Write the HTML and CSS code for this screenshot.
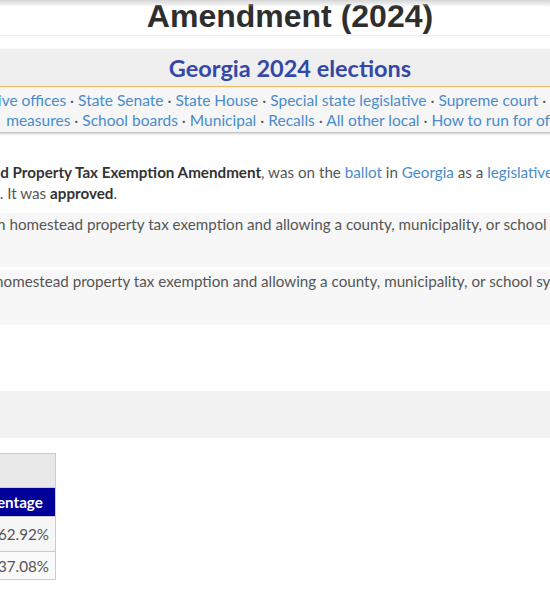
FILE: index.html
```html
<!DOCTYPE html>
<html lang="en">

<head>
    <meta charset="UTF-8">
    <meta name="viewport" content="width=device-width, initial-scale=1.0">
    <title>Georgia Increase Statewide Homestead Property Tax Exemption Amendment (2024)</title>
    <link rel="stylesheet" href="styles.css">
</head>

<body>
    <div class="top-shadow"></div>

    <div class="page">
        <h1 class="title">Georgia Increase Statewide Homestead Property Tax Exemption Amendment (2024)</h1>

        <!-- Elections navbox -->
        <div class="navbox">
            <div class="navbox-head"><a href="#">Georgia 2024 elections</a></div>
            <div class="navbox-links">
                <a href="#">U.S. President</a> · <a href="#">Congress</a> · <a href="#">State executive offices</a> · <a href="#">State Senate</a> · <a href="#">State House</a> · <a href="#">Special state legislative</a> · <a href="#">Supreme court</a> · <a href="#">Court of Appeals</a> · <a href="#">Local judges</a> · <a href="#">State ballot measures</a> · <a href="#">School boards</a> · <a href="#">Municipal</a> · <a href="#">Recalls</a> · <a href="#">All other local</a> · <a href="#">How to run for office</a>
            </div>
        </div>

        <div class="summary">
            <p class="lead">The <b>Georgia Increase Statewide Homestead Property Tax Exemption Amendment</b>, was on the <a href="#">ballot</a> in <a href="#">Georgia</a> as a <a href="#">legislatively referred constitutional amendment</a> on Nov. 5, 2024. It was <b>approved</b>.</p>

            <div class="vote-box">A "yes" vote supported a yearly increase in homestead property tax exemption and allowing a county, municipality, or school system to opt out of the exemption.</div>
            <div class="vote-box">A "no" vote opposed a yearly increase to homestead property tax exemption and allowing a county, municipality, or school system to opt out of the exemption.</div>
        </div>

        <h2 class="band">Election results</h2>

        <table class="results">
            <tr>
                <th colspan="3" class="results-title">Georgia Amendment 1</th>
            </tr>
            <tr class="results-head">
                <th class="col-result">Result</th>
                <th class="col-votes">Votes</th>
                <th class="col-pct">Percentage</th>
            </tr>
            <tr class="row-yes">
                <td><svg class="check" viewBox="0 0 24 24" width="26" height="26"><path d="M4 13l5 5L20 6" fill="none" stroke="#2e8b2e" stroke-width="3.5"/></svg> Yes</td>
                <td class="num">2,996,137</td>
                <td class="num">62.92%</td>
            </tr>
            <tr class="row-no">
                <td>No</td>
                <td class="num">1,765,752</td>
                <td class="num">37.08%</td>
            </tr>
        </table>
    </div>
</body>

</html>
```

FILE: styles.css
```css
body {
    margin: 0;
    padding: 0;
    background: #ffffff;
    font-family: Lato, "Noto Sans", sans-serif;
    font-size: 15.2px;
    color: #555555;
    overflow: hidden;
}

a {
    color: #4a8bcb;
    text-decoration: none;
}

.top-shadow {
    position: fixed;
    top: 0;
    left: 0;
    right: 0;
    height: 7px;
    background: linear-gradient(#d4d4d4, rgba(255, 255, 255, 0));
}

.page {
    width: 1152px;
    margin: -39px 0 0 -286px;
}

.title {
    margin: 0;
    padding: 0 30px;
    font-family: "Liberation Sans", Arial, sans-serif;
    font-size: 32px;
    line-height: 37px;
    font-weight: bold;
    color: #2e2e2e;
    text-align: center;
    border-bottom: 1px solid #ebebeb;
}

.navbox {
    margin-top: 14px;
    background: #f6f6f6;
    box-shadow: 0 1px 3px rgba(0, 0, 0, 0.35);
    text-align: center;
}

.navbox-head {
    height: 36px;
    line-height: 36px;
    background: #efefef;
    border-bottom: 1px solid #f5b460;
    font-size: 23.5px;
    font-weight: bold;
}

.navbox-head a {
    color: #3448a8;
}

.navbox-links {
    padding: 3px 0 2px;
    font-size: 15.5px;
    line-height: 20px;
}

.summary {
    max-width: 960px;
}

.lead {
    margin: 30px 0 0;
    line-height: 21px;
}

.lead b {
    color: #333333;
}

.vote-box {
    margin-top: 9px;
    padding: 1px 10px 11px;
    line-height: 21px;
    background: #f7f7f7;
}

.vote-box + .vote-box {
    margin-top: 3px;
    padding-bottom: 12px;
}

.band {
    margin: 66px 0 0;
    height: 47px;
    padding: 0 10px;
    background: #f2f2f2;
    font-size: 22px;
    line-height: 47px;
    color: #333333;
}

.results {
    margin-top: 15px;
    width: 342px;
    border-collapse: collapse;
    border: 1px solid #c8c8c8;
}

.results th,
.results td {
    border: 1px solid #cccccc;
    padding: 4px 6px;
}

.results-title {
    height: 25px;
    background: #e8e8e8;
    color: #333333;
}

.results-head th {
    background: #000099;
    color: #ffffff;
    height: 20px;
}

.col-pct {
    width: 88px;
}

.row-yes td {
    background: #f6f6f6;
}

.row-no td {
    height: 19px;
    background: #fafafa;
}

.num {
    text-align: right;
}

.check {
    vertical-align: middle;
}
```
